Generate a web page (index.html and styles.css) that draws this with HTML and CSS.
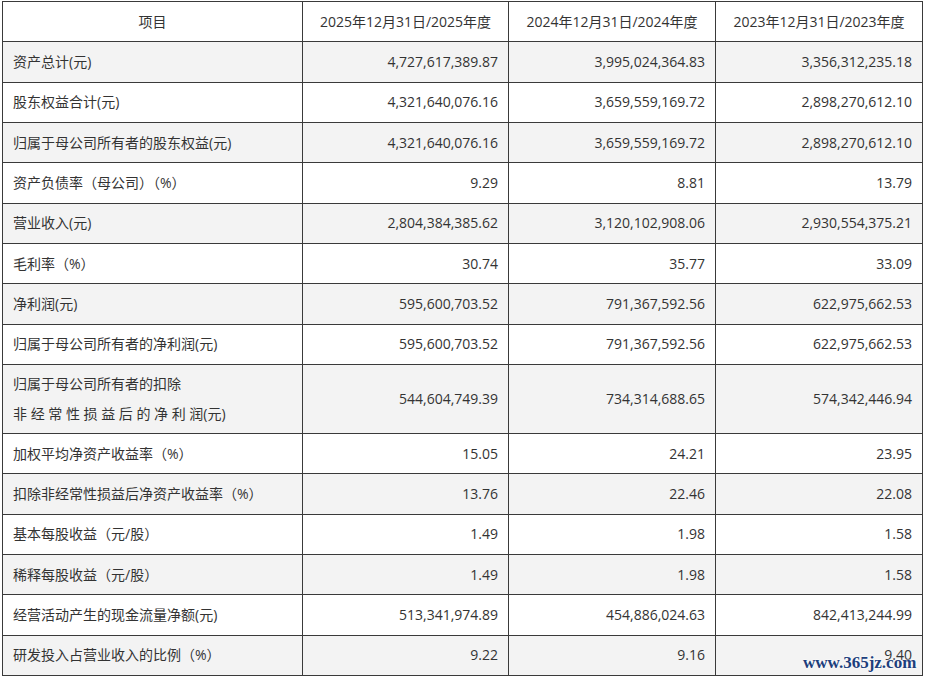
FILE: index.html
```html
<!DOCTYPE html>
<html lang="zh-CN">
<head>
<meta charset="utf-8">
<title>主要财务数据</title>
<link rel="stylesheet" href="styles.css">
</head>
<body>
<div class="page">
<table class="fin">
  <colgroup>
    <col class="c1"><col class="c2"><col class="c3"><col class="c4">
  </colgroup>
  <thead>
    <tr class="row">
      <th>项目</th>
      <th>2025年12月31日/2025年度</th>
      <th>2024年12月31日/2024年度</th>
      <th>2023年12月31日/2023年度</th>
    </tr>
  </thead>
  <tbody>
    <tr class="row alt"><td>资产总计(元)</td><td class="num">4,727,617,389.87</td><td class="num">3,995,024,364.83</td><td class="num">3,356,312,235.18</td></tr>
    <tr class="row"><td>股东权益合计(元)</td><td class="num">4,321,640,076.16</td><td class="num">3,659,559,169.72</td><td class="num">2,898,270,612.10</td></tr>
    <tr class="row alt"><td>归属于母公司所有者的股东权益(元)</td><td class="num">4,321,640,076.16</td><td class="num">3,659,559,169.72</td><td class="num">2,898,270,612.10</td></tr>
    <tr class="row"><td>资产负债率（母公司）（%）</td><td class="num">9.29</td><td class="num">8.81</td><td class="num">13.79</td></tr>
    <tr class="row alt"><td>营业收入(元)</td><td class="num">2,804,384,385.62</td><td class="num">3,120,102,908.06</td><td class="num">2,930,554,375.21</td></tr>
    <tr class="row"><td>毛利率（%）</td><td class="num">30.74</td><td class="num">35.77</td><td class="num">33.09</td></tr>
    <tr class="row alt"><td>净利润(元)</td><td class="num">595,600,703.52</td><td class="num">791,367,592.56</td><td class="num">622,975,662.53</td></tr>
    <tr class="row"><td>归属于母公司所有者的净利润(元)</td><td class="num">595,600,703.52</td><td class="num">791,367,592.56</td><td class="num">622,975,662.53</td></tr>
    <tr class="row2 alt"><td class="two">归属于母公司所有者的扣除<br>非 经 常 性 损 益 后 的 净 利 润(元)</td><td class="num">544,604,749.39</td><td class="num">734,314,688.65</td><td class="num">574,342,446.94</td></tr>
    <tr class="row"><td>加权平均净资产收益率（%）</td><td class="num">15.05</td><td class="num">24.21</td><td class="num">23.95</td></tr>
    <tr class="row alt"><td>扣除非经常性损益后净资产收益率（%）</td><td class="num">13.76</td><td class="num">22.46</td><td class="num">22.08</td></tr>
    <tr class="row"><td>基本每股收益（元/股）</td><td class="num">1.49</td><td class="num">1.98</td><td class="num">1.58</td></tr>
    <tr class="row alt"><td>稀释每股收益（元/股）</td><td class="num">1.49</td><td class="num">1.98</td><td class="num">1.58</td></tr>
    <tr class="row"><td>经营活动产生的现金流量净额(元)</td><td class="num">513,341,974.89</td><td class="num">454,886,024.63</td><td class="num">842,413,244.99</td></tr>
    <tr class="row alt"><td>研发投入占营业收入的比例（%）</td><td class="num">9.22</td><td class="num">9.16</td><td class="num">9.40</td></tr>
  </tbody>
</table>
<div class="watermark">www.365jz.com</div>
</div>
</body>
</html>
```
FILE: styles.css
```css
html, body {
  margin: 0;
  padding: 0;
  background: #ffffff;
}
.page {
  position: relative;
  width: 925px;
  height: 679px;
  padding: 1px 0 0 2px;
  box-sizing: border-box;
}
.fin {
  border-collapse: collapse;
  table-layout: fixed;
  width: 920px;
  font-family: "Open Sans", "Noto Sans CJK SC", sans-serif;
  font-size: 14px;
  color: #333333;
}
.c1 { width: 300px; }
.c2 { width: 206px; }
.c3 { width: 207px; }
.c4 { width: 207px; }
.fin th, .fin td {
  border: 1px solid #3a3a3a;
  padding: 0 10px;
  line-height: 20px;
  font-weight: normal;
  white-space: nowrap;
}
.fin th { text-align: center; }
.fin td { text-align: left; }
.fin td.num { text-align: right; }
.row { height: 40.35px; }
.row2 { height: 69px; }
.fin td.two { line-height: 30px; }
.alt { background: #f3f3f3; }
.watermark {
  position: absolute;
  left: 803px;
  top: 654px;
  font-family: "Liberation Serif", serif;
  font-weight: bold;
  font-size: 17px;
  line-height: 17px;
  color: #1d3f7c;
  text-shadow: 0 0 2px #ffffff, 0 0 2px #ffffff;
}
```
